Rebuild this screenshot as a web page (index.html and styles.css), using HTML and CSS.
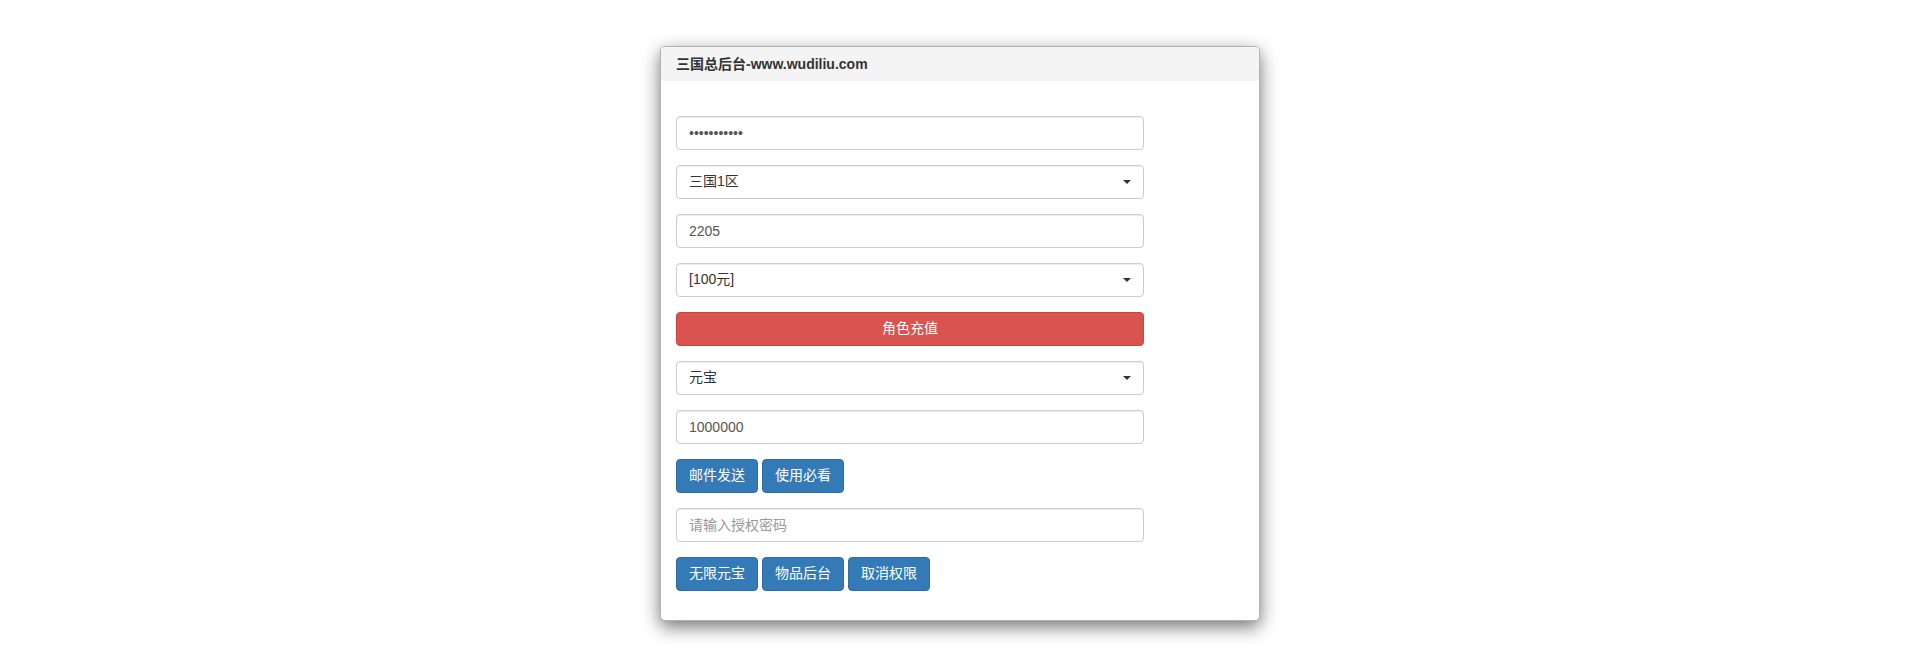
FILE: index.html
```html
<!DOCTYPE html>
<html lang="zh-CN">
<head>
<meta charset="utf-8">
<title>三国总后台</title>
<link rel="stylesheet" href="styles.css">
</head>
<body>
<div class="page">
  <div class="panel">
    <div class="panel-title">三国总后台-www.wudiliu.com</div>
    <div class="panel-body">
      <form class="form">
        <div class="row"><input class="form-control" type="password" value="xxxxxxxxxxx"></div>
        <div class="row select-wrap">
          <select class="form-control"><option>三国1区</option></select>
        </div>
        <div class="row"><input class="form-control" type="text" value="2205"></div>
        <div class="row select-wrap">
          <select class="form-control"><option>[100元]</option></select>
        </div>
        <div class="row"><button type="button" class="btn btn-danger btn-block">角色充值</button></div>
        <div class="row select-wrap">
          <select class="form-control"><option>元宝</option></select>
        </div>
        <div class="row"><input class="form-control" type="text" value="1000000"></div>
        <div class="row btn-row">
          <button type="button" class="btn btn-primary">邮件发送</button>
          <button type="button" class="btn btn-primary">使用必看</button>
        </div>
        <div class="row"><input class="form-control" type="text" placeholder="请输入授权密码"></div>
        <div class="row btn-row">
          <button type="button" class="btn btn-primary">无限元宝</button>
          <button type="button" class="btn btn-primary">物品后台</button>
          <button type="button" class="btn btn-primary">取消权限</button>
        </div>
      </form>
    </div>
  </div>
</div>
</body>
</html>
```
FILE: styles.css
```css
* { box-sizing: border-box; }
html, body {
  margin: 0;
  padding: 0;
  background: #fff;
}
body {
  font-family: "Liberation Sans", "Noto Sans CJK SC", sans-serif;
  font-size: 14px;
  line-height: 1.42857;
  color: #333;
  min-height: 662px;
}
.page {
  display: flex;
  justify-content: center;
  padding-top: 46px;
}
.panel {
  width: 600px;
  background: #fff;
  border: 1px solid rgba(0, 0, 0, 0.3);
  border-radius: 5px;
  box-shadow: 0 6px 18px rgba(0, 0, 0, 0.55);
}
.panel-title {
  height: 34px;
  line-height: 34px;
  padding: 0 15px;
  background: #f4f4f4;
  border-radius: 4px 4px 0 0;
  font-weight: bold;
  font-size: 14px;
  color: #333;
}
.panel-body {
  padding: 35px 15px 14px;
}
.form {
  width: 468px;
  margin: 0;
}
.row {
  margin-bottom: 15px;
}
.form-control {
  display: block;
  width: 100%;
  height: 34px;
  padding: 6px 12px;
  font-family: "Liberation Sans", "Noto Sans CJK SC", sans-serif;
  font-size: 14px;
  line-height: 1.42857;
  color: #555;
  background: #fff;
  border: 1px solid #ccc;
  border-radius: 4px;
  box-shadow: inset 0 1px 1px rgba(0, 0, 0, 0.075);
  outline: none;
  margin: 0;
}
.form-control::placeholder {
  color: #999;
}
select.form-control {
  -webkit-appearance: none;
  appearance: none;
  color: #333;
  padding-right: 30px;
}
.select-wrap {
  position: relative;
}
.select-wrap::after {
  content: "";
  position: absolute;
  right: 13px;
  top: 15px;
  width: 0;
  height: 0;
  border-left: 4px solid transparent;
  border-right: 4px solid transparent;
  border-top: 4px solid #333;
  pointer-events: none;
}
.btn {
  display: inline-block;
  height: 34px;
  padding: 6px 12px;
  font-family: "Liberation Sans", "Noto Sans CJK SC", sans-serif;
  font-size: 14px;
  line-height: 1.42857;
  color: #fff;
  border: 1px solid transparent;
  border-radius: 4px;
  cursor: pointer;
  text-align: center;
  white-space: nowrap;
  margin: 0;
}
.btn-primary {
  background: #337ab7;
  border-color: #2e6da4;
}
.btn-danger {
  background: #d9534f;
  border-color: #d43f3a;
}
.btn-block {
  display: block;
  width: 100%;
}
.btn-row {
  display: flex;
  gap: 4px;
}
```
